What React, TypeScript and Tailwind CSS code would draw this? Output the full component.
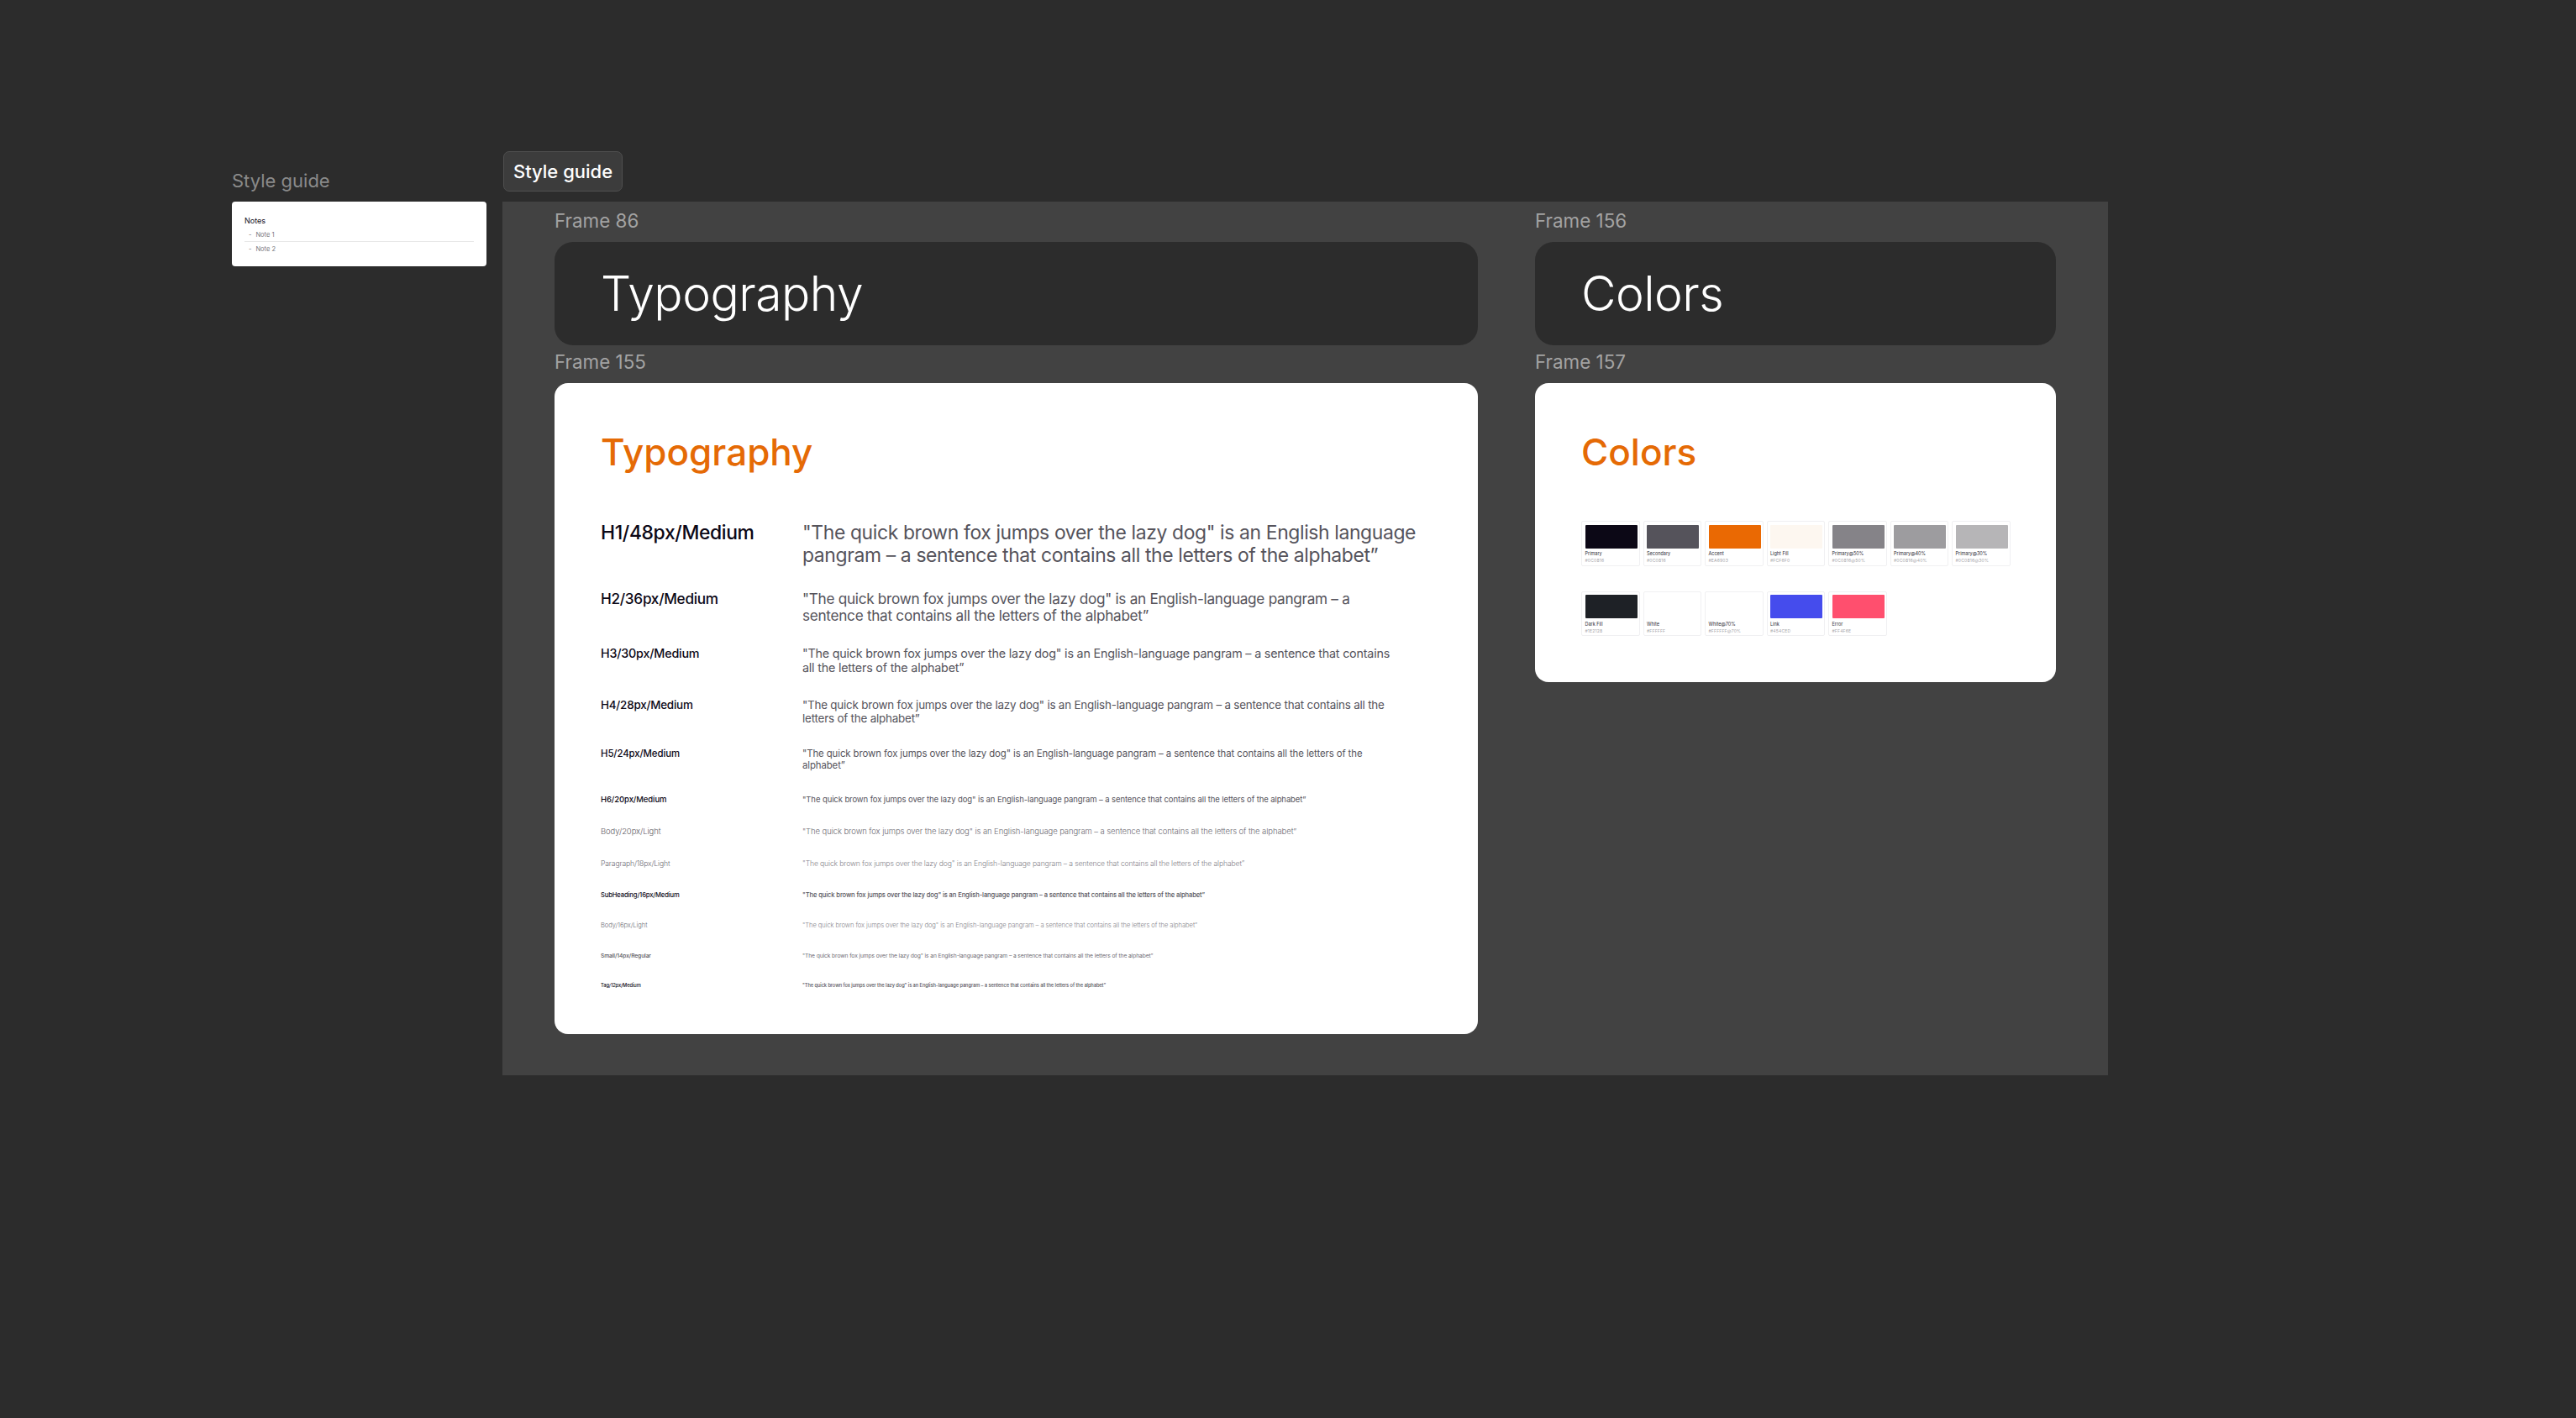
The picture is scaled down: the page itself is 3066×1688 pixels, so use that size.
const pangram =
  '"The quick brown fox jumps over the lazy dog" is an English-language pangram – a sentence that contains all the letters of the alphabet”';

const rows = [
  { label: 'H1/48px/Medium', labelClass: 'text-[22.9px] leading-[27px] tracking-[-0.016em] font-medium text-[#0c0816]', textClass: 'w-[750px] text-[22.9px] leading-[27px] tracking-[-0.016em] text-[#55535b]', text: '"The quick brown fox jumps over the lazy dog" is an English language pangram – a sentence that contains all the letters of the alphabet”' },
  { label: 'H2/36px/Medium', labelClass: 'text-[17.2px] leading-[20px] tracking-[-0.017em] font-medium text-[#0c0816]', textClass: 'w-[708px] text-[17.2px] leading-[20px] tracking-[-0.017em] text-[#55535b]', text: pangram },
  { label: 'H3/30px/Medium', labelClass: 'text-[14.3px] leading-[16.5px] tracking-[-0.0135em] font-medium text-[#0c0816]', textClass: 'w-[708px] text-[14.3px] leading-[16.5px] tracking-[-0.0135em] text-[#55535b]', text: pangram },
  { label: 'H4/28px/Medium', labelClass: 'text-[13.4px] leading-[16px] tracking-[-0.015em] font-medium text-[#0c0816]', textClass: 'w-[708px] text-[13.4px] leading-[16px] tracking-[-0.015em] text-[#55535b]', text: pangram },
  { label: 'H5/24px/Medium', labelClass: 'text-[11.4px] leading-[14px] tracking-[-0.009em] font-medium text-[#0c0816]', textClass: 'w-[708px] text-[11.4px] leading-[14px] tracking-[-0.009em] text-[#55535b]', text: pangram },
  { label: 'H6/20px/Medium', labelClass: 'text-[9.5px] leading-[11px] tracking-[-0.01em] font-medium text-[#0c0816]', textClass: 'w-[708px] text-[9.5px] leading-[11px] tracking-[-0.01em] text-[#55535b]', text: pangram },
  { label: 'Body/20px/Light', labelClass: 'text-[9.5px] leading-[11px] tracking-[-0.01em] font-light text-[#5f5d65]', textClass: 'w-[708px] text-[9.5px] leading-[11px] tracking-[-0.01em] font-light text-[#6d6b73]', text: pangram },
  { label: 'Paragraph/18px/Light', labelClass: 'text-[8.6px] leading-[10.5px] tracking-[-0.015em] font-light text-[#6d6b73]', textClass: 'w-[708px] text-[8.6px] leading-[10.5px] tracking-[-0.015em] font-light text-[#85838a]', text: pangram },
  { label: 'SubHeading/16px/Medium', labelClass: 'text-[7.6px] leading-[9px] tracking-[-0.015em] font-medium text-[#0c0816]', textClass: 'w-[708px] text-[7.6px] leading-[9px] tracking-[-0.015em] font-medium text-[#55535b]', text: pangram },
  { label: 'Body/16px/Light', labelClass: 'text-[7.6px] leading-[9px] tracking-[-0.01em] font-light text-[#6d6b73]', textClass: 'w-[708px] text-[7.6px] leading-[9px] tracking-[-0.01em] font-light text-[#85838a]', text: pangram },
  { label: 'Small/14px/Regular', labelClass: 'text-[6.7px] leading-[8px] tracking-[-0.015em] font-medium text-[#55535b]', textClass: 'w-[708px] text-[6.7px] leading-[8px] tracking-[-0.015em] text-[#6d6b73]', text: pangram },
  { label: 'Tag/12px/Medium', labelClass: 'text-[5.7px] leading-[7px] tracking-[-0.012em] font-medium text-[#0c0816]', textClass: 'w-[708px] text-[5.7px] leading-[7px] tracking-[-0.012em] font-medium text-[#55535b]', text: pangram },
];

const paletteTop = [
  { name: 'Primary', hex: '#0C0816', swatch: 'bg-[#0c0816]' },
  { name: 'Secondary', hex: '#0C0816', swatch: 'bg-[#55535b]' },
  { name: 'Accent', hex: '#EA6903', swatch: 'bg-[#ea6903]' },
  { name: 'Light Fill', hex: '#FCF6F0', swatch: 'bg-[#fdf7f0]' },
  { name: 'Primary@50%', hex: '#0C0816@50%', swatch: 'bg-[#858388]' },
  { name: 'Primary@40%', hex: '#0C0816@40%', swatch: 'bg-[#9d9c9f]' },
  { name: 'Primary@30%', hex: '#0C0816@30%', swatch: 'bg-[#b6b5b7]' },
];

const paletteBottom = [
  { name: 'Dark Fill', hex: '#1E2128', swatch: 'bg-[#1e2126]' },
  { name: 'White', hex: '#FFFFFF', swatch: 'bg-white' },
  { name: 'White@70%', hex: '#FFFFFF@70%', swatch: 'bg-white' },
  { name: 'Link', hex: '#454CED', swatch: 'bg-[#454ced]' },
  { name: 'Error', hex: '#FF4F6E', swatch: 'bg-[#ff4f6e]' },
];

function FrameLabel({ children }: { children: string }) {
  return <div className="h-[28px] text-[22.4px] leading-[28px] text-[#a3a3a3]">{children}</div>;
}

function Banner({ children }: { children: string }) {
  return (
    <div className="flex h-[123px] items-center rounded-[22px] bg-[#2c2c2c] pl-[55px] text-[57px] leading-none tracking-[-0.009em] font-light text-white">
      {children}
    </div>
  );
}

function Chip({ name, hex, swatch }: { name: string; hex: string; swatch: string }) {
  return (
    <div className="h-[53.5px] w-[69.5px] rounded-[2px] border border-[#f0f0f2] bg-white px-[3.5px] pt-[3.5px]">
      <div className={`h-[28px] w-[62px] rounded-[1px] ${swatch}`} />
      <div className="mt-[3.5px] text-[5.5px] leading-[7px] text-[#2c2a33]">{name}</div>
      <div className="mt-[1px] text-[5px] leading-[7px] tracking-[0.2px] text-[#a5a4a9]">{hex}</div>
    </div>
  );
}

export default function App() {
  return (
    <div className="flex h-[1688px] w-[3066px] items-start gap-[19px] overflow-hidden bg-[#2c2c2c] pt-[180px] pl-[276px] font-['Inter',sans-serif]">
      <div className="mt-[21px] w-[303px]">
        <div className="h-[28px] text-[22px] leading-[28px] text-[#8a8a8a]">Style guide</div>
        <div className="mt-[11px] h-[77px] rounded-[4px] bg-white pt-[17px] pr-[15px] pl-[15px]">
          <div className="text-[9px] leading-[11px] text-[#0c0816]">Notes</div>
          <div className="flex h-[20px] items-center gap-[5px] border-b border-[#e8e8e8] pt-[5px] pl-[5px] text-[7.5px] text-[#77757c]">
            <span>-</span>
            <span>Note 1</span>
          </div>
          <div className="flex h-[17px] items-center gap-[5px] pl-[5px] text-[7.5px] text-[#77757c]">
            <span>-</span>
            <span>Note 2</span>
          </div>
        </div>
      </div>

      <div className="w-[1911px]">
        <div className="ml-[1px] flex h-[48px] w-[142px] items-center justify-center rounded-[7px] border border-[#4f4f4f] bg-[#3c3c3c] text-[22px] font-medium text-white">
          Style guide
        </div>

        <div className="mt-[12px] flex h-[1040px] items-start gap-[68px] bg-[#424242] pt-[9px] pl-[62px]">
          <div className="w-[1099px]">
            <FrameLabel>Frame 86</FrameLabel>
            <div className="mt-[11px]">
              <Banner>Typography</Banner>
            </div>
            <div className="mt-[6px]">
              <FrameLabel>Frame 155</FrameLabel>
            </div>
            <div className="mt-[11px] h-[775px] rounded-[16px] bg-white pt-[56px] pl-[55px]">
              <h2 className="text-[44px] leading-[53px] font-medium text-[#e56a05]">Typography</h2>
              <div className="mt-[56px] flex flex-col gap-[27.5px]">
                {rows.map((row) => (
                  <div key={row.label} className="flex items-start">
                    <div className={`w-[240px] shrink-0 ${row.labelClass}`}>{row.label}</div>
                    <div className={row.textClass}>{row.text}</div>
                  </div>
                ))}
              </div>
            </div>
          </div>

          <div className="w-[620px]">
            <FrameLabel>Frame 156</FrameLabel>
            <div className="mt-[11px]">
              <Banner>Colors</Banner>
            </div>
            <div className="mt-[6px]">
              <FrameLabel>Frame 157</FrameLabel>
            </div>
            <div className="mt-[11px] h-[356px] rounded-[16px] bg-white pt-[56px] pl-[55px]">
              <h2 className="text-[44px] leading-[53px] font-medium text-[#e56a05]">Colors</h2>
              <div className="mt-[55px] flex gap-[4px]">
                {paletteTop.map((c) => (
                  <Chip key={c.name} {...c} />
                ))}
              </div>
              <div className="mt-[30px] flex gap-[4px]">
                {paletteBottom.map((c) => (
                  <Chip key={c.name} {...c} />
                ))}
              </div>
            </div>
          </div>
        </div>
      </div>
    </div>
  );
}
